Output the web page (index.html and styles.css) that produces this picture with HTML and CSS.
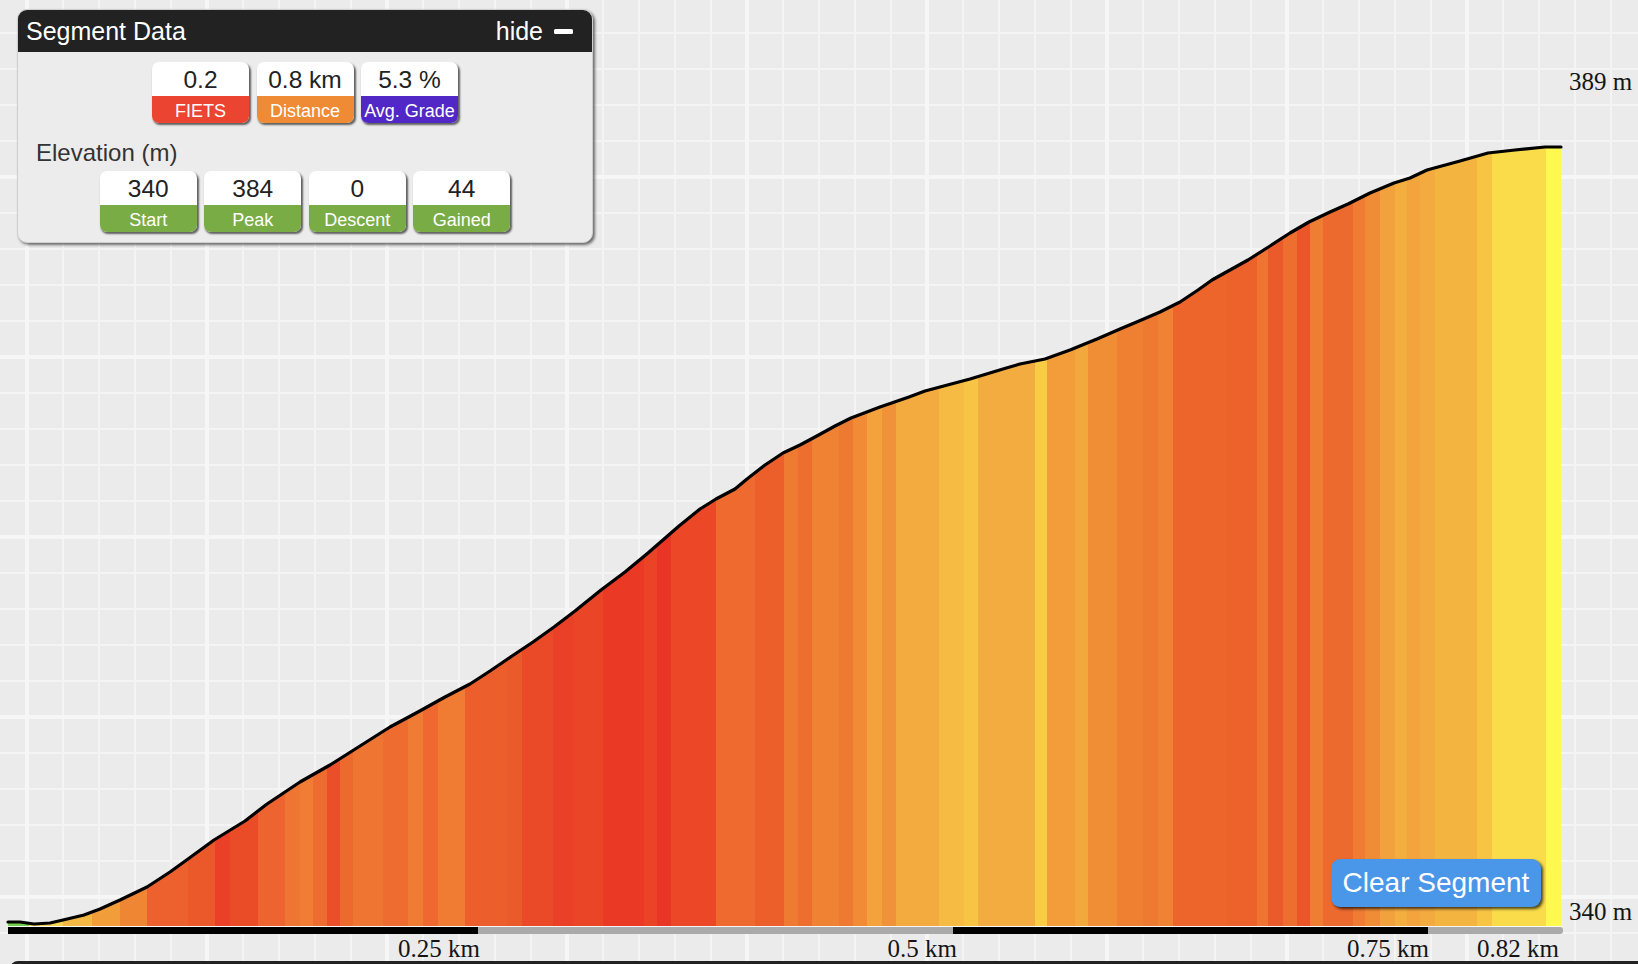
FILE: index.html
```html
<!DOCTYPE html>
<html lang="en">
<head>
<meta charset="utf-8">
<title>Segment Data</title>
<link rel="stylesheet" href="styles.css">
</head>
<body>
<div class="chart">
  <svg class="plot" width="1638" height="961" viewBox="0 0 1638 961" xmlns="http://www.w3.org/2000/svg">
    <defs>
      <clipPath id="area">
        <path d="M8,926 L8,922 L20,922 L34,924 L50,923 L63,920 L84,915 L100,909 L120,900 L147,887 L170,872 L188,859 L214,840 L245,821 L267,804 L300,782 L330,765 L360,746 L390,727 L418,712 L445,697 L470,684 L490,671 L512,656 L533,642 L554,627 L575,611 L601,590 L625,572 L648,553 L679,526 L700,509 L716,499 L735,489 L747,479 L765,465 L783,453 L800,445 L815,437 L835,426 L851,418 L880,407 L909,397 L925,391 L940,387 L970,379 L1003,369 L1020,364 L1045,359 L1070,350 L1097,339 L1120,329 L1139,321 L1160,312 L1180,302 L1198,290 L1212,280 L1230,270 L1248,260 L1270,246 L1290,233 L1309,222 L1330,212 L1348,204 L1370,193 L1394,183 L1410,178 L1427,170 L1460,161 L1488,153 L1515,150 L1545,147 L1561,147 L1561,926 Z"/>
      </clipPath>
    </defs>
    <g clip-path="url(#area)" shape-rendering="crispEdges">
      <rect x="8" y="140" width="21.5" height="790" fill="#72d04e"/>
      <rect x="29" y="140" width="34.5" height="790" fill="#f7d454"/>
      <rect x="63" y="140" width="29.5" height="790" fill="#f4b945"/>
      <rect x="92" y="140" width="28.5" height="790" fill="#f19d39"/>
      <rect x="120" y="140" width="27.5" height="790" fill="#ef8634"/>
      <rect x="147" y="140" width="41.5" height="790" fill="#ec612d"/>
      <rect x="188" y="140" width="27.5" height="790" fill="#eb582a"/>
      <rect x="215" y="140" width="15.5" height="790" fill="#e94027"/>
      <rect x="230" y="140" width="28.5" height="790" fill="#eb4c28"/>
      <rect x="258" y="140" width="27.5" height="790" fill="#ee6430"/>
      <rect x="285" y="140" width="15.5" height="790" fill="#ef7632"/>
      <rect x="300" y="140" width="13.5" height="790" fill="#f07d33"/>
      <rect x="313" y="140" width="14.5" height="790" fill="#ee6c30"/>
      <rect x="327" y="140" width="13.5" height="790" fill="#ea4f2a"/>
      <rect x="340" y="140" width="13.5" height="790" fill="#ed6a2e"/>
      <rect x="353" y="140" width="30.5" height="790" fill="#ef7632"/>
      <rect x="383" y="140" width="25.5" height="790" fill="#ee6c30"/>
      <rect x="408" y="140" width="15.5" height="790" fill="#f07c33"/>
      <rect x="423" y="140" width="15.5" height="790" fill="#ee682f"/>
      <rect x="438" y="140" width="27.5" height="790" fill="#f07b33"/>
      <rect x="465" y="140" width="42.5" height="790" fill="#ec5e2b"/>
      <rect x="507" y="140" width="15.5" height="790" fill="#eb5a2b"/>
      <rect x="522" y="140" width="31.5" height="790" fill="#ea4a28"/>
      <rect x="553" y="140" width="20.5" height="790" fill="#ea4027"/>
      <rect x="573" y="140" width="30.5" height="790" fill="#ea4527"/>
      <rect x="603" y="140" width="41.5" height="790" fill="#ea3a25"/>
      <rect x="644" y="140" width="13.5" height="790" fill="#eb4326"/>
      <rect x="657" y="140" width="14.5" height="790" fill="#e93525"/>
      <rect x="671" y="140" width="45.5" height="790" fill="#ec4727"/>
      <rect x="716" y="140" width="39.5" height="790" fill="#ef6a2e"/>
      <rect x="755" y="140" width="29.5" height="790" fill="#ec5f2b"/>
      <rect x="784" y="140" width="14.5" height="790" fill="#ef7a32"/>
      <rect x="798" y="140" width="14.5" height="790" fill="#ee6e30"/>
      <rect x="812" y="140" width="27.5" height="790" fill="#f08234"/>
      <rect x="839" y="140" width="14.5" height="790" fill="#ee7a32"/>
      <rect x="853" y="140" width="14.5" height="790" fill="#f18b36"/>
      <rect x="867" y="140" width="15.5" height="790" fill="#f3a23c"/>
      <rect x="882" y="140" width="14.5" height="790" fill="#f0923a"/>
      <rect x="896" y="140" width="43.5" height="790" fill="#f3ab40"/>
      <rect x="939" y="140" width="25.5" height="790" fill="#f5bb42"/>
      <rect x="964" y="140" width="14.5" height="790" fill="#f7c444"/>
      <rect x="978" y="140" width="57.5" height="790" fill="#f3ac40"/>
      <rect x="1035" y="140" width="12.5" height="790" fill="#f8cc45"/>
      <rect x="1047" y="140" width="28.5" height="790" fill="#f29c3a"/>
      <rect x="1075" y="140" width="13.5" height="790" fill="#f3a83e"/>
      <rect x="1088" y="140" width="29.5" height="790" fill="#f08e36"/>
      <rect x="1117" y="140" width="26.5" height="790" fill="#ef8032"/>
      <rect x="1143" y="140" width="15.5" height="790" fill="#ee7a32"/>
      <rect x="1158" y="140" width="15.5" height="790" fill="#ef8233"/>
      <rect x="1173" y="140" width="54.5" height="790" fill="#ee652c"/>
      <rect x="1227" y="140" width="30.5" height="790" fill="#ed622b"/>
      <rect x="1257" y="140" width="11.5" height="790" fill="#ef7431"/>
      <rect x="1268" y="140" width="15.5" height="790" fill="#eb5a2a"/>
      <rect x="1283" y="140" width="14.5" height="790" fill="#ee6e2f"/>
      <rect x="1297" y="140" width="13.5" height="790" fill="#eb5528"/>
      <rect x="1310" y="140" width="13.5" height="790" fill="#ef7e33"/>
      <rect x="1323" y="140" width="30.5" height="790" fill="#ec6a2d"/>
      <rect x="1353" y="140" width="12.5" height="790" fill="#ef7c32"/>
      <rect x="1365" y="140" width="15.5" height="790" fill="#f08c36"/>
      <rect x="1380" y="140" width="15.5" height="790" fill="#f2a23c"/>
      <rect x="1395" y="140" width="12.5" height="790" fill="#f4ae40"/>
      <rect x="1407" y="140" width="13.5" height="790" fill="#f3a43d"/>
      <rect x="1420" y="140" width="15.5" height="790" fill="#f3aa3e"/>
      <rect x="1435" y="140" width="42.5" height="790" fill="#f4b540"/>
      <rect x="1477" y="140" width="15.5" height="790" fill="#f7c444"/>
      <rect x="1492" y="140" width="54.5" height="790" fill="#fadc4a"/>
      <rect x="1546" y="140" width="15" height="790" fill="#fff84e"/>
    </g>
    <polyline class="line" points="8,922 20,922 34,924 50,923 63,920 84,915 100,909 120,900 147,887 170,872 188,859 214,840 245,821 267,804 300,782 330,765 360,746 390,727 418,712 445,697 470,684 490,671 512,656 533,642 554,627 575,611 601,590 625,572 648,553 679,526 700,509 716,499 735,489 747,479 765,465 783,453 800,445 815,437 835,426 851,418 880,407 909,397 925,391 940,387 970,379 1003,369 1020,364 1045,359 1070,350 1097,339 1120,329 1139,321 1160,312 1180,302 1198,290 1212,280 1230,270 1248,260 1270,246 1290,233 1309,222 1330,212 1348,204 1370,193 1394,183 1410,178 1427,170 1460,161 1488,153 1515,150 1545,147 1561,147"/>
    <rect x="8" y="926" width="1555" height="1" fill="#f7f7f7"/>
    <rect x="8" y="927" width="1555" height="7" rx="3" fill="#aaaaaa"/>
    <rect x="8" y="927" width="470" height="7" fill="#000"/>
    <rect x="953" y="927" width="475" height="7" fill="#000"/>
    <text class="axis" x="1569" y="90">389 m</text>
    <text class="axis" x="1569" y="920">340 m</text>
    <text class="axis end" x="480" y="957">0.25 km</text>
    <text class="axis end" x="957" y="957">0.5 km</text>
    <text class="axis end" x="1429" y="957">0.75 km</text>
    <text class="axis end" x="1559" y="957">0.82 km</text>
  </svg>

  <section class="panel">
    <header class="panel-head">
      <span class="title">Segment Data</span>
      <span class="hide">hide <span class="minus"></span></span>
    </header>
    <div class="panel-body">
      <div class="row">
        <div class="stat"><div class="val">0.2</div><div class="lab red">FIETS</div></div>
        <div class="stat"><div class="val">0.8 km</div><div class="lab orange">Distance</div></div>
        <div class="stat"><div class="val">5.3 %</div><div class="lab purple">Avg. Grade</div></div>
      </div>
      <div class="section-title">Elevation (m)</div>
      <div class="row">
        <div class="stat"><div class="val">340</div><div class="lab green">Start</div></div>
        <div class="stat"><div class="val">384</div><div class="lab green">Peak</div></div>
        <div class="stat"><div class="val">0</div><div class="lab green">Descent</div></div>
        <div class="stat"><div class="val">44</div><div class="lab green">Gained</div></div>
      </div>
    </div>
  </section>

  <button class="clear">Clear Segment</button>
</div>
<div class="footer"></div>
</body>
</html>
```

FILE: styles.css
```css
html, body {
  margin: 0;
  padding: 0;
  height: 964px;
  overflow: hidden;
}

body {
  background: #ebebeb;
  font-family: "Liberation Sans", Arial, sans-serif;
}

.chart {
  position: relative;
  height: 961px;
  background-color: #ebebeb;
  background-image:
    linear-gradient(90deg, transparent 25px, #f6f6f6 25px, #f6f6f6 29px, transparent 29px),
    linear-gradient(180deg, transparent 175px, #f6f6f6 175px, #f6f6f6 179px, transparent 179px),
    linear-gradient(90deg, transparent 26px, #f4f4f4 26px, #f4f4f4 28px, transparent 28px),
    linear-gradient(180deg, transparent 32px, #f4f4f4 32px, #f4f4f4 34px, transparent 34px);
  background-size: 180px 100%, 100% 180px, 36px 100%, 100% 36px;
}

.plot {
  display: block;
}

.line {
  fill: none;
  stroke: #000;
  stroke-width: 3.2;
  stroke-linejoin: round;
  stroke-linecap: round;
}

.axis {
  font-family: "Liberation Serif", "Times New Roman", serif;
  font-size: 25px;
  fill: #151515;
}

.axis.end {
  text-anchor: end;
}

.panel {
  position: absolute;
  left: 17px;
  top: 9px;
  width: 576px;
  height: 234px;
  box-sizing: border-box;
  background: #ececec;
  border: 1px solid #cfcfcf;
  border-radius: 10px;
  box-shadow: 2px 2px 3px rgba(0, 0, 0, 0.55);
  overflow: hidden;
}

.panel-head {
  height: 42px;
  background: #222;
  color: #fff;
  display: flex;
  align-items: center;
  justify-content: space-between;
  padding: 0 19px 0 8px;
  font-size: 25px;
}

.hide {
  display: flex;
  align-items: center;
  gap: 11px;
}

.minus {
  display: block;
  width: 19px;
  height: 5px;
  background: #fff;
  border-radius: 1.5px;
}

.panel-body {
  padding-top: 10px;
}

.row {
  display: flex;
  justify-content: center;
  gap: 7.5px;
}

.stat {
  width: 97px;
  background: #fff;
  border-radius: 7px;
  overflow: hidden;
  box-shadow: 1.5px 2px 2px rgba(0, 0, 0, 0.6);
}

.val {
  height: 34px;
  line-height: 35px;
  text-align: center;
  font-size: 24.5px;
  color: #222;
}

.lab {
  height: 27px;
  line-height: 30px;
  text-align: center;
  font-size: 18px;
  color: #fff;
  overflow: hidden;
}

.red { background: #eb4431; }
.orange { background: #ef8b34; }
.purple { background: #5128c6; }
.green { background: #7aac46; }

.section-title {
  margin: 16px 0 4px 18px;
  font-size: 24px;
  line-height: 28px;
  color: #333;
}

.clear {
  position: absolute;
  left: 1331px;
  top: 859px;
  width: 210px;
  height: 48px;
  padding: 0;
  border: none;
  border-radius: 9px;
  background: #4a96e8;
  color: #fff;
  font-family: "Liberation Sans", Arial, sans-serif;
  font-size: 28px;
  box-shadow: 2px 2px 3px rgba(0, 0, 0, 0.7);
}

.footer {
  height: 14px;
  margin-left: 10px;
  background: #222;
  border-radius: 8px 0 0 0;
}
```
